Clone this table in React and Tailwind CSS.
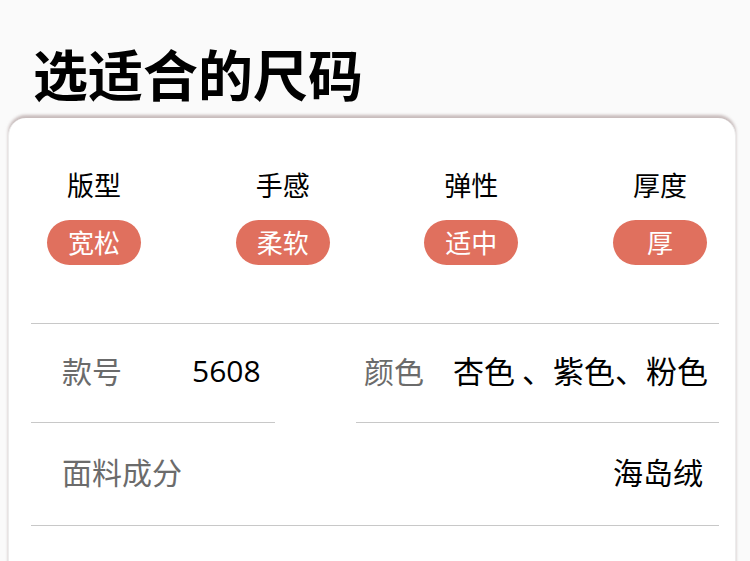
const attrs = [
  { label: '版型', value: '宽松' },
  { label: '手感', value: '柔软' },
  { label: '弹性', value: '适中' },
  { label: '厚度', value: '厚' },
];

export default function App() {
  return (
    <div
      className="w-[750px] h-[561px] overflow-hidden bg-[#fafafa]"
      style={{ fontFamily: '"Noto Sans CJK SC", "Noto Sans", sans-serif' }}
    >
      <h1 className="pl-[33px] pt-[37px] h-[118px] text-[55px] leading-[70px] font-bold text-black">
        选适合的尺码
      </h1>

      <div className="ml-[8px] w-[728px] h-[460px] bg-white rounded-t-[18px] shadow-[0_-3px_3px_rgba(165,145,145,0.6)] border-l border-r border-[#ececec] pl-[22px] pr-[16px]">
        <div className="flex justify-between pl-[16px] pr-[12px] pt-[46px]">
          {attrs.map((a) => (
            <div key={a.label} className="w-[94px] flex flex-col items-center">
              <span className="text-[27px] leading-[42px] text-black">{a.label}</span>
              <span className="mt-[14px] w-[94px] h-[45px] rounded-full bg-[#e0705e] text-white text-[26px] leading-[44px] text-center">
                {a.value}
              </span>
            </div>
          ))}
        </div>

        <div className="mt-[58px] border-t border-[#c8c8c8]" />

        <div className="flex h-[99px]">
          <div className="w-[244px] flex items-center pb-[6px] border-b border-[#c8c8c8] pl-[31px]">
            <span className="w-[130px] text-[30px] text-[#6b6b6b]">款号</span>
            <span className="text-[30px] text-black" style={{ fontFamily: '"Open Sans", "Noto Sans", sans-serif' }}>5608</span>
          </div>
          <div className="ml-[81px] flex-1 flex items-center pb-[6px] border-b border-[#c8c8c8] pl-[8px]">
            <span className="w-[89px] text-[30px] text-[#6b6b6b]">颜色</span>
            <span className="text-[31px] text-black whitespace-nowrap">杏色 、紫色、粉色</span>
          </div>
        </div>

        <div className="flex items-center justify-between h-[103px] pb-[6px] border-b border-[#c8c8c8] pl-[31px] pr-[16px]">
          <span className="text-[30px] text-[#6b6b6b]">面料成分</span>
          <span className="text-[30px] text-black">海岛绒</span>
        </div>
      </div>
    </div>
  );
}
